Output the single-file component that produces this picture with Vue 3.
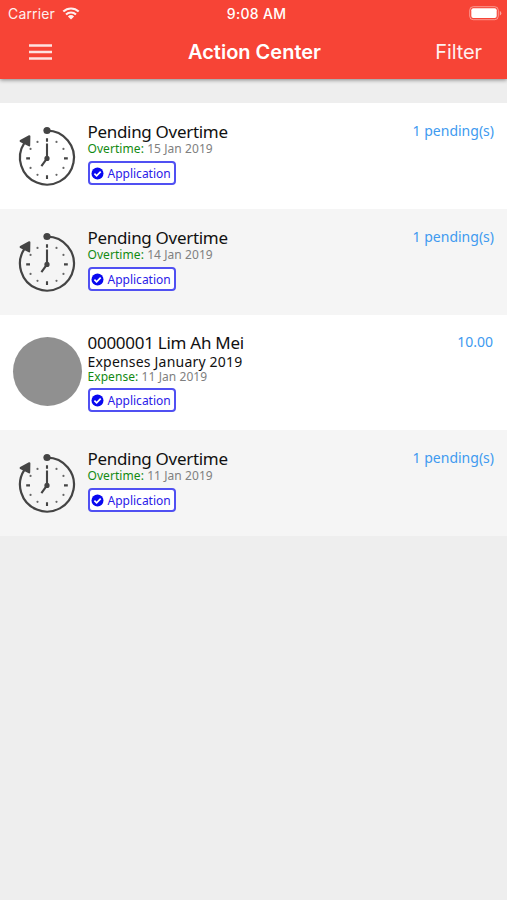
<template>
    <div class="page">
        <header class="header">
            <div class="status">
                <div class="carrier">
                    <span>Carrier</span>
                    <svg width="18" height="13" viewBox="0 0 18 13">
                        <path d="M1.3 4.6a11 11 0 0 1 15.4 0M4 7.5a7.2 7.2 0 0 1 10 0" fill="none" stroke="#fff" stroke-width="2.1" />
                        <path d="M5.9 9.5a4.6 4.6 0 0 1 6.2 0L9 12.6z" fill="#fff" />
                    </svg>
                </div>
                <span class="time">9:08 AM</span>
                <svg class="battery" width="33" height="15" viewBox="0 0 33 15">
                    <rect x=".7" y=".7" width="28.6" height="13" rx="3.6" fill="none" stroke="#fff" stroke-opacity=".45" />
                    <rect x="2.3" y="2.3" width="25.4" height="9.8" rx="2" fill="#fff" />
                    <path d="M30.8 5v4.6q1.5-.6 1.5-2.3t-1.5-2.3" fill="#fff" fill-opacity=".5" />
                </svg>
            </div>
            <div class="nav">
                <svg class="menu" width="23" height="16" viewBox="0 0 23 16">
                    <path d="M0 1.5h23M0 8h23M0 14.5h23" stroke="#fff" stroke-width="2.4" stroke-opacity=".85" />
                </svg>
                <span class="title">Action Center</span>
                <span class="filter">Filter</span>
            </div>
        </header>
        <ul class="list">
            <li v-for="item in pendingList" :key="item.id" class="item" :class="{tall:item.subtitle}">
                <div class="picture">
                    <div v-if="item.subtitle" class="avatar"></div>
                    <svg v-else width="70" height="70" viewBox="0 0 70 70">
                        <path d="M35 7.6A27 27 0 1 1 12.4 19.8" fill="none" stroke="#444" stroke-width="2.2" />
                        <circle cx="35" cy="7.5" r="3.6" fill="#444" />
                        <path d="M8.6 18L17.4 13.2L17.2 22.4z" fill="#444" stroke="#444" stroke-width="2" stroke-linejoin="round" />
                        <path d="M35 15.2v3.6M35 52.2v3.8M14.2 35.4h3.8M52 35.4h3.8" stroke="#444" stroke-width="2.1" />
                        <g fill="#666">
                            <circle v-for="(dot,index) in dots" :key="index" :cx="dot.x" :cy="dot.y" r="1.1" />
                        </g>
                        <path d="M35 20.5v14.9l-5.6 7.8" fill="none" stroke="#444" stroke-width="2.1" />
                        <circle cx="35" cy="35.4" r="2.6" fill="#444" />
                    </svg>
                </div>
                <div class="content">
                    <h2>{{ item.title }}</h2>
                    <h3 v-if="item.subtitle">{{ item.subtitle }}</h3>
                    <p><span class="type">{{ item.type }}:</span> {{ item.date }}</p>
                    <div class="badge">
                        <svg width="13" height="13" viewBox="0 0 13 13">
                            <circle cx="6.5" cy="6.5" r="6" fill="#0808f0" />
                            <path d="M3.4 6.7l2.2 2.2l4.1-4.3" fill="none" stroke="#fff" stroke-width="1.7" />
                        </svg>
                        <span>Application</span>
                    </div>
                </div>
                <span class="amount">{{ item.amount }}</span>
            </li>
        </ul>
    </div>
</template>

<script setup>
import { ref } from 'vue'
const pendingList = ref([
    {id:1,title:'Pending Overtime',type:'Overtime',date:'15 Jan 2019',amount:'1 pending(s)'},
    {id:2,title:'Pending Overtime',type:'Overtime',date:'14 Jan 2019',amount:'1 pending(s)'},
    {id:3,title:'0000001 Lim Ah Mei',subtitle:'Expenses January 2019',type:'Expense',date:'11 Jan 2019',amount:'10.00'},
    {id:4,title:'Pending Overtime',type:'Overtime',date:'11 Jan 2019',amount:'1 pending(s)'},
])
// minute dots between the four main ticks
const dots = [30,60,120,150,210,240,300,330].map(deg => ({
    x: 35 + 19 * Math.sin(deg * Math.PI / 180),
    y: 35.4 - 19 * Math.cos(deg * Math.PI / 180)
}))
</script>

<style>
body{
    background-color: #eee;
}
</style>

<style scoped>
.page{
    min-height: 900px;
    background-color: #eee;
    font-family: "Noto Sans", sans-serif;
}
.header{
    height: 79px;
    background-color: #f74436;
    color: #fff;
    font-family: Inter, sans-serif;
    box-shadow: 0 1px 4px rgba(0,0,0,.45);
}
.status{
    display: grid;
    grid-template-columns: 1fr auto 1fr;
    align-items: center;
    height: 27px;
    padding: 0 5px 0 8px;
    font-size: 14px;
}
.carrier{
    display: flex;
    align-items: center;
    gap: 7px;
    letter-spacing: .15px;
    opacity: .92;
}
.time{
    font-weight: 500;
    font-size: 14px;
    letter-spacing: .3px;
    margin-left: 3px;
}
.battery{
    justify-self: end;
}
.nav{
    display: grid;
    grid-template-columns: 1fr auto 1fr;
    align-items: center;
    height: 50px;
    padding: 0 25px 0 28px;
}
.menu{
    margin-left: 1px;
}
.title{
    font-size: 20px;
    font-weight: 600;
    margin-left: -1px;
}
.filter{
    justify-self: end;
    font-size: 20px;
    letter-spacing: -.1px;
    opacity: .92;
}
.list{
    list-style: none;
    margin: 24px 0 0;
    padding: 0;
}
.item{
    box-sizing: border-box;
    display: flex;
    height: 106px;
    padding: 18px 13px 0 12px;
    background-color: #fff;
}
.item:nth-child(even){
    background-color: #f5f5f5;
}
.item.tall{
    height: 115px;
}
.picture{
    width: 70px;
    height: 70px;
    margin-top: 2px;
}
.tall .picture{
    margin-top: 4px;
}
.avatar{
    width: 69px;
    height: 69px;
    margin-left: 1px;
    border-radius: 50%;
    background-color: #909090;
}
.content{
    flex: 1;
    margin: 1px 0 0 5.5px;
    white-space: nowrap;
}
.tall .content{
    margin-top: 0;
}
h2, h3, p{
    margin: 0;
    font-weight: 400;
    color: #111;
}
h2{
    font-size: 17px;
    line-height: 20px;
    letter-spacing: -.31px;
}
.tall h2{
    letter-spacing: -.27px;
}
h3{
    font-size: 14px;
    line-height: 17px;
    letter-spacing: .2px;
}
p{
    font-size: 12px;
    line-height: 14px;
    letter-spacing: .07px;
    color: #808080;
}
.type{
    color: #128a12;
}
.badge{
    box-sizing: border-box;
    display: flex;
    align-items: center;
    gap: 4px;
    width: 88px;
    height: 24px;
    margin-top: 5px;
    padding-left: 2px;
    border: 2px solid #5050f2;
    border-radius: 4px;
    background-color: #fff;
    font-size: 12px;
    color: #2a20e8;
}
.badge svg{
    margin-left: -1px;
}
.tall .badge{
    margin-top: 4px;
}
.amount{
    font-size: 14px;
    line-height: 20px;
    color: #409af0;
}
.tall .amount{
    margin: -1px 1px 0 0;
}
</style>
